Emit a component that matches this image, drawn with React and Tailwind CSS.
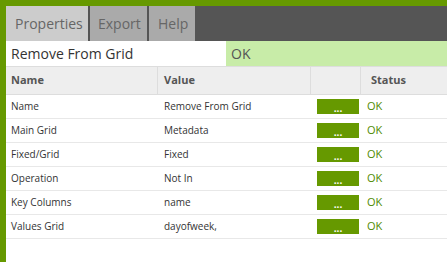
import React from "react";

const rows = [
  ["Name", "Remove From Grid"],
  ["Main Grid", "Metadata"],
  ["Fixed/Grid", "Fixed"],
  ["Operation", "Not In"],
  ["Key Columns", "name"],
  ["Values Grid", "dayofweek,"],
];

export default function App() {
  return (
    <div
      className="w-[447px] h-[262px] bg-white border-l-[6px] border-t-[6px] border-[#669900] overflow-hidden flex flex-col"
      style={{ fontFamily: '"Open Sans", "Noto Sans", sans-serif' }}
    >
      <div className="h-[35px] bg-[#555555] flex shrink-0">
        <div className="w-[84px] bg-[#cccccc] text-[#666666] text-[14px] flex items-center pl-[9px] border-r-2 border-[#555555]">
          Properties
        </div>
        <div className="w-[59px] bg-[#aaaaaa] text-[#666666] text-[14px] flex items-center pl-[8px] border-r-2 border-[#555555]">
          Export
        </div>
        <div className="w-[46px] bg-[#aaaaaa] text-[#666666] text-[14px] flex items-center pl-[9px]">
          Help
        </div>
      </div>
      <div className="h-[25px] flex shrink-0">
        <div className="w-[220px] flex items-center pl-[5px] text-[14px] text-[#333333]">
          Remove From Grid
        </div>
        <div className="flex-1 bg-[#c8eca8] flex items-center pl-[5px] text-[14px] text-[#555555]">
          OK
        </div>
      </div>
      <div className="h-[29px] flex shrink-0 bg-[#eeeeee] border-y border-[#dddddd] text-[11px] font-bold text-[#555555]">
        <div className="w-[152px] flex items-center pl-[5px] border-r border-[#dddddd]">Name</div>
        <div className="w-[153px] flex items-center pl-[6px] border-r border-[#dddddd]">Value</div>
        <div className="w-[50px] border-r border-[#dddddd]"></div>
        <div className="flex-1 flex items-center pl-[10px]">Status</div>
      </div>
      {rows.map(([n, v]) => (
        <div
          key={n}
          className="h-[24px] flex shrink-0 border-b border-[#e8e8e8] text-[10px] text-[#333333]"
        >
          <div className="w-[152px] flex items-center pl-[5px]">{n}</div>
          <div className="w-[153px] flex items-center pl-[6px]">{v}</div>
          <div className="w-[50px] flex items-center pl-[6px]">
            <div className="w-[42px] h-[15px] bg-[#669900] text-white text-[10px] font-bold flex items-center justify-center leading-none pt-[3px]">
              ...
            </div>
          </div>
          <div className="flex-1 flex items-center pl-[6px] text-[11px] text-[#4f8a00]">OK</div>
        </div>
      ))}
    </div>
  );
}
